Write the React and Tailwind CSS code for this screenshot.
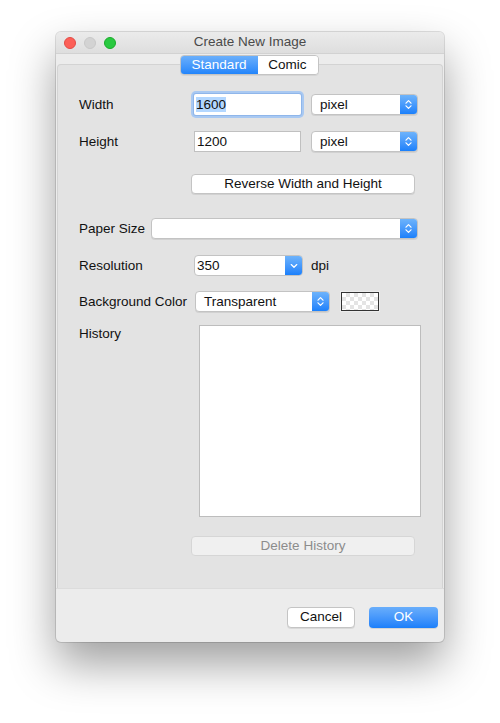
import React from 'react'

const font = { fontFamily: '"Liberation Sans", Arial, sans-serif' }

function UpDown() {
  return (
    <svg width="7" height="11" viewBox="0 0 7 11" fill="none">
      <path d="M1 4.2 L3.5 1.6 L6 4.2 M1 6.8 L3.5 9.4 L6 6.8" stroke="white" strokeWidth="1.2" strokeLinecap="round" strokeLinejoin="round" />
    </svg>
  )
}

function Down() {
  return (
    <svg width="8" height="6" viewBox="0 0 8 6" fill="none">
      <path d="M1.2 1.6 L4 4.2 L6.8 1.6" stroke="white" strokeWidth="1.3" strokeLinecap="round" strokeLinejoin="round" />
    </svg>
  )
}

function Select({ value, className = '' }) {
  return (
    <div className={`flex h-[21px] items-stretch rounded-[4px] border border-[#c3c3c3] bg-white shadow-[0_1px_0_rgba(0,0,0,0.08)] overflow-hidden ${className}`}>
      <span className="flex-1 pl-[8px] leading-[19px] text-[#111]">{value}</span>
      <span className="flex w-[17px] items-center justify-center bg-gradient-to-b from-[#6db3fb] to-[#1a80fb]">
        <UpDown />
      </span>
    </div>
  )
}

function Button({ children, className = '', disabled }) {
  return (
    <div
      className={`flex h-[20px] items-center justify-center rounded-[4px] border ${
        disabled
          ? 'border-[#d6d6d6] bg-[#f0f0f0] text-[#8c8c8c]'
          : 'border-[#c4c4c4] bg-white text-[#111] shadow-[0_1px_0_rgba(0,0,0,0.08)]'
      } ${className}`}
    >
      {children}
    </div>
  )
}

export default function App() {
  return (
    <div className="h-[723px] w-[500px] bg-white pl-[56px] pt-[32px] text-[13.5px] text-[#111]" style={font}>
      <div className="flex h-[610px] w-[388px] flex-col overflow-hidden rounded-[5px] bg-[#ececec] shadow-[0_0_0_1px_rgba(0,0,0,0.12),0_22px_45px_rgba(0,0,0,0.38)]">
        {/* Title bar */}
        <div className="relative flex h-[22px] items-center justify-center border-b border-[#d2d2d2] bg-gradient-to-b from-[#ebebeb] to-[#dedede]">
          <div className="absolute left-[8px] top-[5px] flex gap-[8px]">
            <span className="h-[12px] w-[12px] rounded-full border border-[#e24b45] bg-[#fc5f57]" />
            <span className="h-[12px] w-[12px] rounded-full border border-[#c8c8c8] bg-[#d3d3d3]" />
            <span className="h-[12px] w-[12px] rounded-full border border-[#1aab29] bg-[#29c940]" />
          </div>
          <span className="text-[13.5px] text-[#4a4a4a]">Create New Image</span>
        </div>

        {/* Tabs */}
        <div className="relative z-10 mt-[1px] flex justify-center pr-[2px]">
          <div className="flex h-[20px] overflow-hidden rounded-[4px] border border-[#c4c4c4] shadow-[0_1px_0_rgba(0,0,0,0.06)]">
            <span className="flex w-[77px] items-center justify-center bg-gradient-to-b from-[#6aaffb] to-[#2185fb] text-white">Standard</span>
            <span className="flex w-[60px] items-center justify-center bg-white">Comic</span>
          </div>
        </div>

        {/* Panel */}
        <div className="mx-[1px] -mt-[11px] h-[524px] rounded-t-[4px] border border-b-0 border-[#d3d3d3] bg-[#e3e3e3] pl-[21px]">
          <div className="mt-[29px] flex h-[21px] items-center">
            <span className="w-[115px] pt-[1px]">Width</span>
            <div className="h-[21px] w-[107px] rounded-[2px] bg-white shadow-[0_0_0_1px_#8fb6ea,0_0_0_3px_#a9c9f2] pl-[2px] leading-[21px]">
              <span className="bg-[#b3d7ff]">1600</span>
            </div>
            <Select value="pixel" className="ml-[10px] w-[107px]" />
          </div>

          <div className="mt-[16px] flex h-[21px] items-center">
            <span className="w-[115px] pt-[1px]">Height</span>
            <div className="h-[21px] w-[107px] border border-[#c0c0c0] bg-white pl-[2px] leading-[20px]">1200</div>
            <Select value="pixel" className="ml-[10px] w-[107px]" />
          </div>

          <Button className="ml-[112px] mt-[22px] w-[224px]">Reverse Width and Height</Button>

          <div className="mt-[24px] flex h-[21px] items-center">
            <span className="w-[72px] pt-[1px]">Paper Size</span>
            <Select value="" className="w-[267px]" />
          </div>

          <div className="mt-[16px] flex h-[21px] items-center">
            <span className="w-[115px] pt-[1px]">Resolution</span>
            <div className="flex h-[21px] w-[109px] items-stretch overflow-hidden rounded-[4px] border border-[#c3c3c3] bg-white">
              <span className="flex-1 pl-[2px] leading-[19px]">350</span>
              <span className="flex w-[17px] items-center justify-center bg-gradient-to-b from-[#6db3fb] to-[#1a80fb]">
                <Down />
              </span>
            </div>
            <span className="ml-[8px] pt-[1px]">dpi</span>
          </div>

          <div className="mt-[15px] flex h-[21px] items-center">
            <span className="w-[116px] pt-[1px]">Background Color</span>
            <Select value="Transparent" className="w-[135px]" />
            <div className="ml-[10px] h-[21px] w-[40px] border border-[#ececec] bg-white">
              <div className="h-full w-full border-[1.5px] border-[#333] bg-[conic-gradient(#e4e4e4_25%,#ffffff_0_50%,#e4e4e4_0_75%,#ffffff_0)] bg-[length:8px_8px]" />
            </div>
          </div>

          <div className="mt-[13px] flex">
            <span className="w-[120px] pt-[1px] leading-[16px]">History</span>
            <div className="h-[192px] w-[222px] border border-[#bdbdbd] bg-white" />
          </div>

          <Button disabled className="ml-[112px] mt-[19px] w-[224px]">Delete History</Button>
        </div>

        {/* Bottom bar */}
        <div className="flex flex-1 justify-end gap-[14px] border-t border-[#dcdcdc] pr-[6px] pt-[18px]">
          <Button className="h-[21px] w-[68px]">Cancel</Button>
          <div className="flex h-[21px] w-[69px] items-center justify-center rounded-[4px] bg-gradient-to-b from-[#69aefb] to-[#1a7ffa] text-white shadow-[0_1px_0_rgba(0,0,0,0.1)]">OK</div>
        </div>
      </div>
    </div>
  )
}
